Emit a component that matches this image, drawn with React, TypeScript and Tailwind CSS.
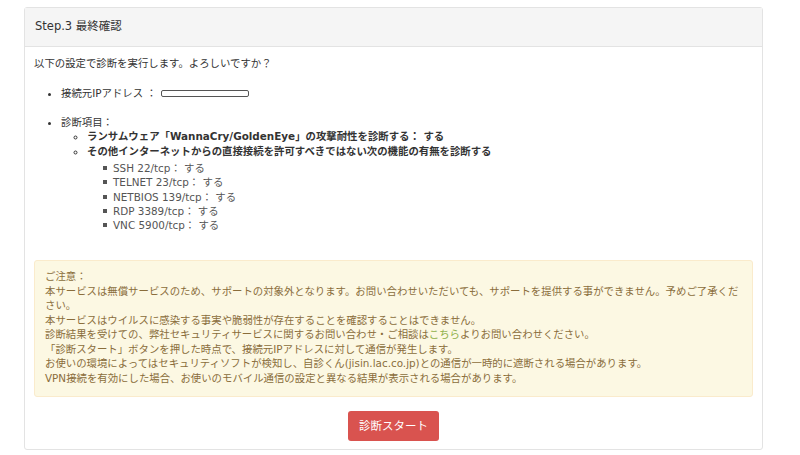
const font = { fontFamily: '"DejaVu Sans", "Noto Sans CJK JP", sans-serif' };

const ports = ["SSH 22/tcp", "TELNET 23/tcp", "NETBIOS 139/tcp", "RDP 3389/tcp", "VNC 5900/tcp"];

export default function App() {
  return (
    <div className="min-h-[455px] bg-white pt-[7px]" style={font}>
      <div className="ml-[24px] w-[739px] rounded-[3px] border border-[#e3e3e3]">
        <div className="flex h-[39px] items-center border-b border-[#e3e3e3] bg-[#f5f5f5] px-[10px] text-[11.5px] text-[#333]">
          Step.3 最終確認
        </div>

        <div className="px-[9px] pt-[9px] pb-[8px] text-[10.4px] leading-[14.5px] text-[#333]">
          <p>以下の設定で診断を実行します。よろしいですか？</p>

          <ul className="mt-[15px] list-disc pl-[27px]">
            <li>
              接続元IPアドレス ：
              <span className="ml-[4px] inline-block h-[7px] w-[88px] rounded-[2px] border border-[#555] align-middle" />
            </li>
            <li className="mt-[14.5px]">
              診断項目：
              <ul className="list-[circle] pl-[26px]">
                <li className="font-bold">ランサムウェア「WannaCry/GoldenEye」の攻撃耐性を診断する： する</li>
                <li className="font-bold">
                  その他インターネットからの直接接続を許可すべきではない次の機能の有無を診断する
                  <ul className="mt-[3px] list-none pl-[26px] font-normal leading-[14.3px] text-[#555]">
                    {ports.map((p) => (
                      <li key={p} className="relative">
                        <span className="absolute left-[-10px] top-[5px] h-[4px] w-[4px] bg-[#555]" />
                        {p}： する
                      </li>
                    ))}
                  </ul>
                </li>
              </ul>
            </li>
          </ul>

          <div className="mt-[28px] rounded-[3px] border border-[#faebcc] bg-[#fcf8e3] pl-[10px] pr-[8px] pt-[8px] pb-[11px] text-[#8a6d3b] whitespace-nowrap">
            <div>ご注意：</div>
            <div>本サービスは無償サービスのため、サポートの対象外となります。お問い合わせいただいても、サポートを提供する事ができません。予めご了承くだ</div>
            <div>さい。</div>
            <div>本サービスはウイルスに感染する事実や脆弱性が存在することを確認することはできません。</div>
            <div>
              診断結果を受けての、弊社セキュリティサービスに関するお問い合わせ・ご相談は
              <a className="text-[#8fb04a]">こちら</a>
              よりお問い合わせください。
            </div>
            <div>「診断スタート」ボタンを押した時点で、接続元IPアドレスに対して通信が発生します。</div>
            <div>お使いの環境によってはセキュリティソフトが検知し、自診くん(jisin.lac.co.jp)との通信が一時的に遮断される場合があります。</div>
            <div>VPN接続を有効にした場合、お使いのモバイル通信の設定と異なる結果が表示される場合があります。</div>
          </div>

          <div className="mt-[14px] flex justify-center">
            <button className="h-[30px] w-[91px] rounded-[3px] bg-[#d9534f] text-[11.5px] text-white">
              診断スタート
            </button>
          </div>
        </div>
      </div>
    </div>
  );
}
